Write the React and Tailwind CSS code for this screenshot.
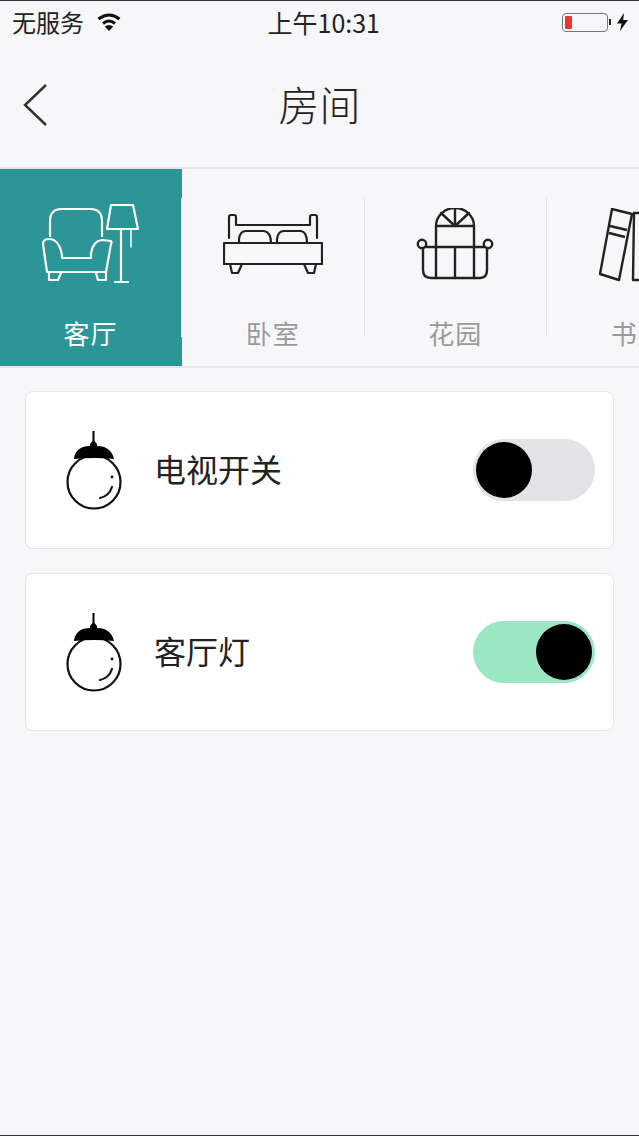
import React from "react";

const font = { fontFamily: '"Noto Sans CJK SC", "Noto Sans", sans-serif' };

function Sofa() {
  return (
    <svg width="98" height="82" viewBox="0 0 98 82" fill="none" stroke="#fff" strokeWidth="2.2" strokeLinejoin="round" strokeLinecap="round">
      <path d="M8 33V18Q8 6 20 6H48Q60 6 60 18V33" />
      <path d="M1 41Q1 36 7 36Q17 36 20 52V55H49V50Q51 38 60 37L69 38Q70 39 69 41L64 69H5Z" />
      <path d="M7 70V77H16L19 70M54 70L56 77H64V70" />
      <path d="M69 2H91L96 26H65ZM79 26V79M73 79H86" />
      <path d="M89 26V44" strokeWidth="1.5" />
    </svg>
  );
}

function Bed() {
  return (
    <svg width="100" height="64" viewBox="0 0 100 64" fill="none" stroke="#222" strokeWidth="2.2" strokeLinejoin="round" strokeLinecap="round">
      <path d="M6 26V5Q6 3 8 3H11Q13 3 13 5V13H87V5Q87 3 89 3H92Q94 3 94 5V26" />
      <path d="M1 31H99V52H1Z" />
      <path d="M7 52L9 61H15L19 52M81 52L85 61H91L93 52" />
      <path d="M16 31V27Q17 19 23 19H41Q48 20 48 31M54 31V27Q55 19 61 19H78Q84 20 84 31" />
    </svg>
  );
}

function Balcony() {
  return (
    <svg width="78" height="72" viewBox="0 0 78 72" fill="none" stroke="#222" strokeWidth="2.4" strokeLinejoin="round" strokeLinecap="round">
      <path d="M20 70V18A19 18 0 0 1 58 18V70M20 18H58" />
      <path d="M39 18V1M39 18L25 5M39 18L53 5" />
      <path d="M10 39H68M39 40V70" />
      <circle cx="6" cy="36" r="4.2" />
      <circle cx="72" cy="36" r="4.2" />
      <path d="M7 40V62Q7 70 15 70H64Q71 70 71 62V40" />
    </svg>
  );
}

function Books() {
  return (
    <svg width="78" height="74" viewBox="0 0 78 74" fill="none" stroke="#222" strokeWidth="2.4" strokeLinejoin="round">
      <path d="M13 1L33 6L20 72L1 66Z" />
      <path d="M11 18L28 22M10 25L26 29" />
      <path d="M35 5H60V72H34Z" />
    </svg>
  );
}

function Lamp() {
  return (
    <svg width="58" height="80" viewBox="0 0 58 80" fill="none" className="shrink-0 mt-[2px]">
      <circle cx="28" cy="51" r="26.5" stroke="#111" strokeWidth="2.2" />
      <path d="M8 28C9 19 15 15 24 15V13L26.5 10V0H28.5V10L31 13V15C40 15 46 19 48 28Q28 26 8 28Z" fill="#000" />
      <circle cx="46" cy="46" r="1.4" fill="#111" />
      <path d="M34 67Q43 65 46 56" stroke="#111" strokeWidth="2.2" strokeLinecap="round" />
    </svg>
  );
}

const tabs = [
  { label: "客厅", icon: <Sofa />, active: true, pt: "pt-[34px]" },
  { label: "卧室", icon: <Bed />, pt: "pt-[43px]" },
  { label: "花园", icon: <Balcony />, pt: "pt-[39px]" },
  { label: "书房", icon: <Books />, pt: "pt-[39px]" },
];

function Tab({ tab }) {
  return (
    <div className={`shrink-0 flex items-center ${tab.active ? "w-[182px] bg-[#2c9597]" : "w-[182.5px]"}`}>
      <div className="flex-1 h-full flex flex-col items-center">
        <div className={`h-[139px] ${tab.pt}`}>{tab.icon}</div>
        <div className={`text-[26px] leading-[50px] tracking-[1px] ${tab.active ? "text-white" : "text-[#9a9a9a]"}`}>{tab.label}</div>
      </div>
      <div className={`w-px h-[139px] ${tab.active ? "bg-[#eef3f3]" : "bg-[#e2e2e4]"}`} />
    </div>
  );
}

function Toggle({ on }) {
  return (
    <div className={`w-[122px] h-[62px] rounded-full flex items-center px-[3px] ${on ? "bg-[#9be6c3] justify-end" : "bg-[#e3e2e6] justify-start"}`}>
      <div className="w-[56px] h-[56px] rounded-full bg-black" />
    </div>
  );
}

function Card({ title, on }) {
  return (
    <div className="h-[158px] bg-white border border-[#e4e4e7] rounded-lg flex items-center pl-[40px] pr-[18px]">
      <Lamp />
      <div className="ml-[30px] text-[32px] leading-none text-[#222] flex-1 pb-[4px]">{title}</div>
      <Toggle on={on} />
    </div>
  );
}

export default function App() {
  return (
    <div style={font} className="w-[639px] h-[1136px] overflow-hidden bg-[#f7f6f9] flex flex-col">
      <div className="h-px bg-[#333] shrink-0" />
      <div className="h-[42px] grid grid-cols-[1fr_116px_1fr] items-center pl-3 pr-[10px] text-[#222] shrink-0">
        <div className="flex items-center gap-[13px] text-[24px] leading-none">
          <span>无服务</span>
          <svg width="24" height="18" viewBox="0 0 24 18" fill="none" stroke="#111" strokeWidth="3">
            <path d="M1.5 6Q12 -2 22.5 6" />
            <path d="M6 10.5Q12 5.5 18 10.5" />
            <path d="M12 18L7.8 13.5Q12 10.5 16.2 13.5Z" fill="#111" stroke="none" />
          </svg>
        </div>
        <div className="pl-[5px] text-[25px] leading-none text-center whitespace-nowrap">上午10:31</div>
        <div className="flex items-center justify-end gap-[5.5px]">
          <div className="w-[46px] h-[19px] rounded-[4px] border border-[#777] p-[2px] flex">
            <div className="w-[7px] bg-[#f0342c] rounded-[1px]" />
          </div>
          <div className="w-[2px] h-[6px] bg-[#222] ml-[-5px]" />
          <svg width="13" height="18" viewBox="0 0 13 18" fill="#111">
            <path d="M8 0L1 10.5H5.5L4 18L12 7H7.2Z" />
          </svg>
        </div>
      </div>
      <div className="h-[126px] relative flex items-center justify-center shrink-0 border-b-2 border-[#e6e6e8]">
        <svg width="26" height="42" viewBox="0 0 26 42" fill="none" stroke="#333" strokeWidth="2.5" className="absolute left-[23px] top-[41px]">
          <path d="M23 1L2 21L23 41" />
        </svg>
        <div className="text-[41px] leading-none text-[#222] font-light pb-[4px]">房间</div>
      </div>
      <div className="h-[199px] flex overflow-hidden shrink-0 border-b-2 border-[#e6e6e8]">
        {tabs.map((tab) => (
          <Tab key={tab.label} tab={tab} />
        ))}
      </div>
      <div className="flex-1 flex flex-col gap-[24px] pt-[23px] pl-[25px] pr-[25px]">
        <Card title="电视开关" />
        <Card title="客厅灯" on />
      </div>
      <div className="h-px bg-[#333] shrink-0" />
    </div>
  );
}
